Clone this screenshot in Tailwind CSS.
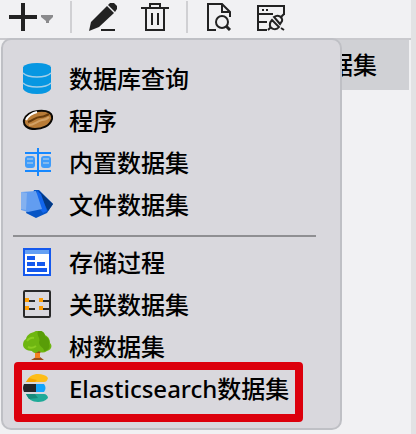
<!DOCTYPE html>
<html lang="zh-CN">
<head>
    <meta charset="UTF-8">
    <meta name="viewport" content="width=device-width, initial-scale=1.0">
    <title>数据集</title>
    <script src="https://cdn.jsdelivr.net/npm/@tailwindcss/browser@4"></script>
</head>
<body class="min-h-screen flex bg-[#f1f1f3] text-black text-2xl font-medium font-['Noto_Sans','Noto_Sans_CJK_SC',sans-serif]">
<div class="relative flex-1 min-w-0">

    <!-- Toolbar -->
    <div class="flex items-center h-10 pl-[9px] pb-1 border-b-2 border-[#c9c9cd] text-[#222222]">
        <button type="button" aria-label="新建" class="flex items-center gap-1">
            <svg class="size-7" viewBox="0 0 28 28" fill="none" stroke="currentColor" stroke-width="4">
                <path d="M14 0v28M0 14h28"/>
            </svg>
            <svg class="w-3 h-3" viewBox="0 0 12 12" fill="#8a8a8c"><path d="M0 4h12v2L8 10v2H5v-2L0 6z"/></svg>
        </button>
        <div class="w-[2px] h-8 mx-[17px] bg-[#d0d0d3]"></div>
        <div class="flex gap-6">
            <button type="button" aria-label="编辑">
                <svg class="size-7" viewBox="0 0 28 28" fill="currentColor">
                    <path d="M0 28L2 19 18 3l7 7L10 24z"/>
                    <path d="M19 2l2-2h4l3 3v3l-2 3z"/>
                    <path d="M12 26h14v2H12z"/>
                </svg>
            </button>
            <button type="button" aria-label="删除">
                <svg class="size-7" viewBox="0 0 28 28" fill="none" stroke="currentColor" stroke-width="2">
                    <path d="M0 5h28M9 5V1h10v4M5 5v22h18V5M11 10v12M17 10v12"/>
                </svg>
            </button>
        </div>
        <div class="w-[2px] h-8 mx-[17px] bg-[#d0d0d3]"></div>
        <div class="flex gap-6">
            <button type="button" aria-label="预览">
                <svg class="size-7" viewBox="0 0 28 28" fill="none" stroke="currentColor" stroke-width="2">
                    <path d="M11 27H3V1h14l8 8v5M17 1v8h8"/>
                    <circle cx="17" cy="19" r="6"/>
                    <path d="M21 23l4 4" stroke-width="3"/>
                </svg>
            </button>
            <button type="button" aria-label="连接设置">
                <svg class="size-7" viewBox="0 0 28 28" fill="none" stroke="currentColor" stroke-width="2">
                    <path d="M10 27H1V3h26v9M1 11h15M1 19h9M5 7h2M9 7h2"/>
                    <path d="M15 17l7 7c-3 4-10 2-9-3 0-2 1-3 2-4zM17 14c4-3 9 0 8 4l-2 3zM23 15l4-4M14 24l-3 3M24 25l3 2"/>
                </svg>
            </button>
        </div>
    </div>

    <!-- Selected row behind the menu -->
    <div class="flex items-center justify-end h-[50px] ml-2 mr-[2px] pr-8 bg-[#d0d1d5]">数据集</div>

    <!-- Drop-down menu -->
    <div role="menu" class="absolute top-[38px] left-px w-[341px] py-[18px] border-2 border-[#bfc0c5] rounded-[10px] bg-[#d9d8dd]">
        <button type="button" role="menuitem" class="flex items-center gap-4 w-full h-[42px] pl-[18px]">
            <svg class="size-8" viewBox="0 0 32 32">
                <path d="M2 4Q5 0 16 0t14 4v22q-3 5-14 5T2 26z" fill="#0797e2"/>
                <path d="M2 10q4 4 14 4t14-4M2 20q4 4 14 4t14-4" fill="none" stroke="#a4cfe8" stroke-width="1.5"/>
            </svg>
            数据库查询
        </button>
        <button type="button" role="menuitem" class="flex items-center gap-4 w-full h-[42px] pl-[18px]">
            <svg class="size-8" viewBox="0 0 32 32">
                <path d="M3 15Q6 7 17 6c10-1 15 2 14 8-2 7-10 10-17 10C6 24 2 20 3 15z" fill="#b97c37" stroke="#0c0905" stroke-width="2"/>
                <path d="M5 15q3-6 11-8" fill="none" stroke="#fff" stroke-width="2"/>
                <path d="M7 17c5-1 7-5 12-5 4 0 5-1 9-3" fill="none" stroke="#683c0c" stroke-width="2"/>
                <path d="M8 20c5 0 8-4 13-5 3 0 5-1 7-3" fill="none" stroke="#d3a266" stroke-width="2"/>
            </svg>
            程序
        </button>
        <button type="button" role="menuitem" class="flex items-center gap-4 w-full h-[42px] pl-[18px]">
            <svg class="size-8" viewBox="0 0 32 32">
                <path d="M17 1v28M4 6h26M4 24h26" fill="none" stroke="#1688ff" stroke-width="2"/>
                <rect x="4" y="9" width="10" height="12" rx="3" fill="#3f9cfa"/>
                <rect x="20" y="9" width="10" height="12" rx="3" fill="#3f9cfa"/>
                <path d="M6 12h6M6 16h6M22 12h6M22 16h6" fill="none" stroke="#82b9ef" stroke-width="2"/>
            </svg>
            内置数据集
        </button>
        <button type="button" role="menuitem" class="flex items-center gap-4 w-full h-[42px] pl-[18px]">
            <svg class="size-8" viewBox="0 0 32 32">
                <path d="M13 1h5l14 14-6 9-11 5-10-5z" fill="#0755c5"/>
                <path d="M18 2l14 13-5 7-7-14z" fill="#043983"/>
                <path d="M16 2l4 3 6 17-4 2-6-8z" fill="#1266ed"/>
                <path d="M0 3l15-1 6 18-14 3-7-2z" fill="#629df0"/>
                <path d="M0 3l6 1-1 17-5-1z" fill="#84b1ef"/>
            </svg>
            文件数据集
        </button>

        <hr class="h-[2px] mt-[9px] mb-[5px] ml-[10px] mr-6 border-0 bg-[#8f8f92]">

        <button type="button" role="menuitem" class="flex items-center gap-4 w-full h-[42px] pl-[18px]">
            <svg class="size-8" viewBox="0 0 32 32">
                <path d="M3 2h26v26H3z" fill="#fff" stroke="#1559ed" stroke-width="2"/>
                <path d="M4 3h24v4H4z" fill="#65a0f3"/>
                <path d="M6 9h8v4H6zM6 15h8v4H6zM16 15h8v4h-8zM6 21h20v4H6z" fill="#1559ed"/>
            </svg>
            存储过程
        </button>
        <button type="button" role="menuitem" class="flex items-center gap-4 w-full h-[42px] pl-[18px]">
            <svg class="size-8" viewBox="0 0 32 32">
                <rect x="3" y="2" width="26" height="26" rx="1" fill="none" stroke="#292929" stroke-width="2"/>
                <path d="M8 12h6M22 12h6M8 20h6M22 20h6" fill="none" stroke="#292929" stroke-width="2"/>
                <path d="M4 9h4v4H4zM18 9h4v4h-4zM4 17h4v4H4zM18 17h4v4h-4z" fill="#ff9d00"/>
            </svg>
            关联数据集
        </button>
        <button type="button" role="menuitem" class="flex items-center gap-4 w-full h-[42px] pl-[18px]">
            <svg class="size-8" viewBox="0 0 32 32">
                <path d="M11 18l4 5v3l-5 3h13l-4-3v-4l4-4z" fill="#9a4c18"/>
                <path d="M14 22h5v5h-5z" fill="#f58220"/>
                <path d="M13 1c4-3 10-1 11 3 4 2 5 5 5 8 3 3 1 7-3 8-3 2-6 2-8 0-3 3-6 2-7 0-5 0-9-3-9-6 0-3 1-5 3-6 1-4 4-6 8-7z" fill="#6eb611"/>
                <path d="M17 0c4-1 7 2 7 5 4 2 5 5 4 8 2 4-2 7-5 7 0-4-5-4-5-9 2-4-3-6-1-11z" fill="#599d08"/>
                <path d="M6 10q3-4 7-3M7 16q4 2 8-1" fill="none" stroke="#8acd21" stroke-width="2"/>
            </svg>
            树数据集
        </button>
        <button type="button" role="menuitem" class="relative flex items-center gap-4 w-full h-[42px] pl-[18px]">
            <svg class="size-8" viewBox="0 0 32 32">
                <path d="M5 9c3-6 7-8 12-8 4 0 8 1 10 4-1 3-2 4-4 4z" fill="#fdbd18"/>
                <path d="M5 9l3-4 8 2-2 2z" fill="#f5a400"/>
                <path d="M3 11h12v8H3q-2-4 0-8z" fill="#242528"/>
                <path d="M15 11h8q3 4 0 8h-8z" fill="#12a5fa"/>
                <path d="M5 21h18c2 0 4 2 4 4-3 3-6 4-10 4-6 0-10-3-12-8z" fill="#20aa98"/>
                <path d="M5 21h9l3 4-9 1z" fill="#168b7c"/>
            </svg>
            Elasticsearch数据集
            <!-- Highlight frame -->
            <span class="absolute -top-[6px] left-[11px] w-[289px] h-[60px] border-8 border-[#dc000c] rounded"></span>
        </button>
    </div>
</div>

<!-- Window edge -->
<div class="w-[5px] bg-[#e2e2e4]"></div>
</body>
</html>
